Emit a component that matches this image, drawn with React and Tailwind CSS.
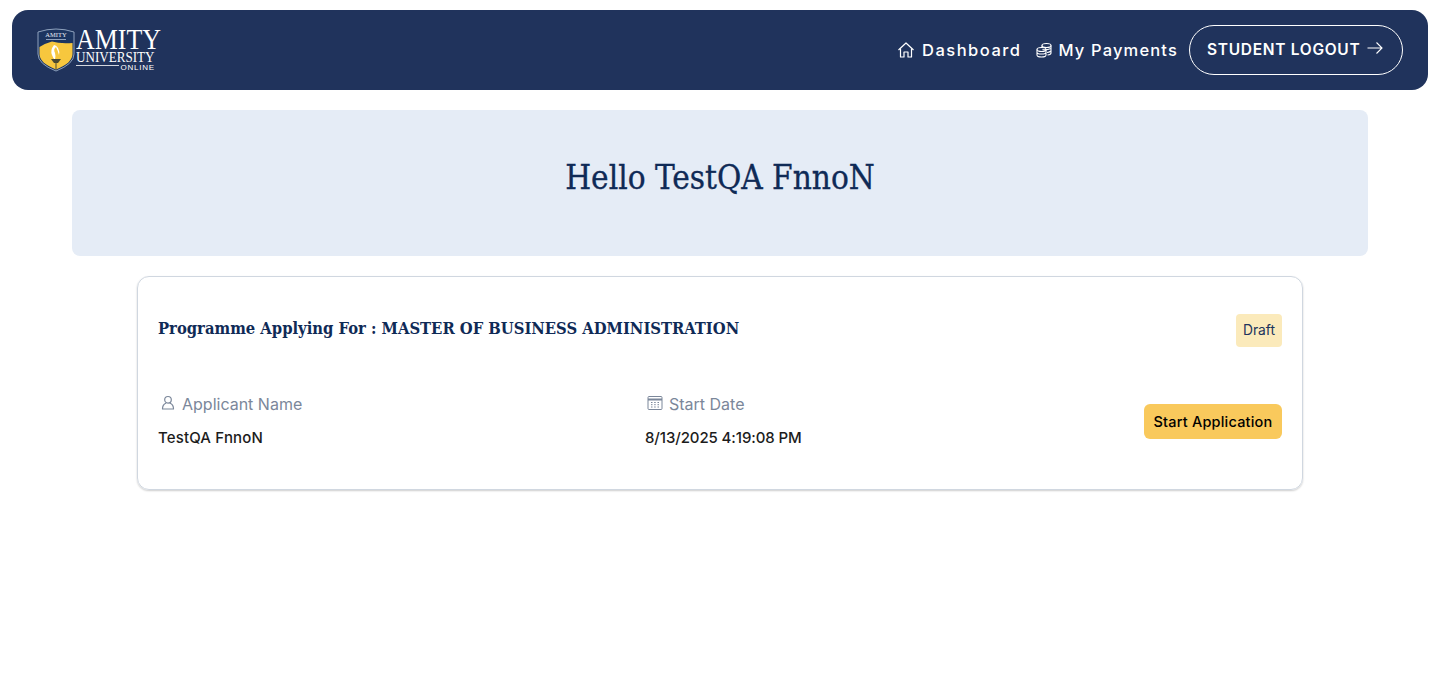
import React from "react";

const sans = "font-['Inter','Noto_Sans',sans-serif]";
const lib = "font-['Liberation_Serif',serif]";
const serif = "font-['DejaVu_Serif_Condensed','DejaVu_Serif',serif]";

function Logo() {
  return (
    <div className="flex items-center gap-[1px]">
      <svg width="38" height="44" viewBox="0 0 38 44" className="shrink-0">
        <path d="M1 4 Q10 1 19 1 Q28 1 37 4 V26 Q37 36 19 43 Q1 36 1 26 Z" fill="#1c3560" stroke="#8fa2bd" strokeWidth="1" />
        <path d="M2.5 19 Q9 15 15 13.5 Q23 16 35.5 15 V26 Q35.5 35 19 41.5 Q2.5 35 2.5 26 Z" fill="#f7c73e" />
        <text x="19" y="9" textAnchor="middle" fill="#e8edf5" fontSize="6.5" fontFamily="Liberation Serif">AMITY</text>
        <rect x="9" y="11" width="20" height="1" fill="#8fa2bd" />
        <path d="M17 17 Q13 22 15 27 Q16 30 18 32 Q19 28 18 25 Q16 21 19 19 Q21 23 22 27 Q23 24 21 20 Q19 17 17 17 Z" fill="#ffffff" />
        <path d="M14 31 L24 31 L21 35 L17 35 Z" fill="#4a4a32" />
        <path d="M19 35 V41" stroke="#4a4a32" strokeWidth="1" />
      </svg>
      <div className={`${lib} w-[85px] h-[46px] text-white whitespace-nowrap leading-none`}>
        <div className="text-[30px] leading-[24px] scale-x-[0.865] origin-left">AMITY</div>
        <div className="text-[15.5px] leading-[12px] scale-x-[0.845] origin-left">UNIVERSITY</div>
        <div className="flex items-center w-[79px] gap-[1px] mt-[1px]">
          <span className="flex-1 h-px bg-white/80 -mt-[6px]" />
          <span className="font-['Liberation_Sans',sans-serif] text-[8px] leading-[8px] tracking-[0.8px]">ONLINE</span>
        </div>
      </div>
    </div>
  );
}

function HomeIcon() {
  return (
    <svg width="18" height="18" viewBox="0 0 18 18" fill="none" stroke="white" strokeWidth="1.2" strokeLinejoin="round">
      <path d="M1.5 9 L9 2 L16.5 9" />
      <path d="M3.5 7.5 V16 H7 V11 H11 V16 H14.5 V7.5" />
    </svg>
  );
}

function CoinsIcon() {
  return (
    <svg width="16" height="16" viewBox="0 0 16 16" fill="none" stroke="white" strokeWidth="1.1">
      <ellipse cx="10.5" cy="3.5" rx="4.5" ry="2" />
      <path d="M6 3.5 V6 M15 3.5 V11 Q15 12.6 11.5 13 M6.5 7.5 Q10 8.5 15 6.5 M11 10.5 Q13 10.5 15 9" />
      <ellipse cx="5.5" cy="7.5" rx="4.5" ry="2" />
      <path d="M1 7.5 V13 Q1 15 5.5 15 Q10 15 10 13 V7.5 M1 10.2 Q1 12 5.5 12 Q10 12 10 10.2" />
    </svg>
  );
}

function UserIcon() {
  return (
    <svg width="16" height="16" viewBox="0 0 16 16" fill="none" stroke="#7b879a" strokeWidth="1.2" strokeLinecap="round" className="-mt-[2px]">
      <circle cx="8" cy="4.8" r="3.3" />
      <path d="M2.5 14 Q2.5 9.5 5.8 8.2 M13.5 14 Q13.5 9.5 10.2 8.2 M2.5 14 H13.5" />
    </svg>
  );
}

function CalendarIcon() {
  return (
    <svg width="16" height="16" viewBox="0 0 16 16" fill="none" stroke="#7b879a" strokeWidth="1" className="-mt-[3px]">
      <rect x="1" y="1.5" width="14" height="13" rx="1" />
      <path d="M1 4.5 H15" strokeWidth="2" />
      <path d="M4 7.5h1.5M7.2 7.5h1.5M10.5 7.5h1.5M4 9.7h1.5M7.2 9.7h1.5M10.5 9.7h1.5M4 12h1.5M7.2 12h1.5M10.5 12h1.5" />
    </svg>
  );
}

function ArrowIcon() {
  return (
    <svg width="16" height="14" viewBox="0 0 16 14" fill="none" stroke="white" strokeWidth="1.1" className="-mt-[4px]">
      <path d="M0.5 7 H15 M9.5 1.5 L15 7 L9.5 12.5" />
    </svg>
  );
}

export default function App() {
  return (
    <div className={`${sans} min-h-[681px] bg-white pt-[10px]`}>
      <header className="mx-3 h-20 rounded-2xl bg-[#20335c] flex items-center justify-between pl-[25px] pr-[25px]">
        <Logo />
        <nav className="flex items-center text-white">
          <a className="flex items-center gap-[7px] text-[16.5px] font-medium tracking-[1.5px] mr-[14px]">
            <HomeIcon />
            Dashboard
          </a>
          <a className="flex items-center gap-[7px] text-[16.5px] font-medium tracking-[1.15px] mr-[11px]">
            <CoinsIcon />
            My Payments
          </a>
          <button className="h-[50px] w-[214px] rounded-[25px] border border-white flex items-center pl-[17px] gap-[7px] text-[15.5px] font-semibold tracking-[0.7px]">
            STUDENT LOGOUT
            <ArrowIcon />
          </button>
        </nav>
      </header>

      <section className="mx-[72px] mt-5 h-[146px] rounded-lg bg-[#e5ecf6] flex items-center justify-center">
        <h1 className={`${serif} text-[33px] text-[#0f2a56] font-normal -mt-[11px] [-webkit-text-stroke:0.3px_#0f2a56]`}>Hello TestQA FnnoN</h1>
      </section>

      <section className="mx-[137px] mt-5 h-[214px] rounded-xl border border-[#d0d7e0] shadow-[0_1px_2px_rgba(0,0,0,0.2)] px-5 flex flex-col">
        <div className="flex items-center justify-between mt-[37px]">
          <h2 className={`${serif} text-[16.45px] font-bold text-[#0f2a56] -mt-[2px]`}>
            Programme Applying For : MASTER OF BUSINESS ADMINISTRATION
          </h2>
          <span className="h-[33px] w-[46px] rounded bg-[#fbeabb] text-[#20335c] text-[13.8px] flex items-center justify-center">
            Draft
          </span>
        </div>
        <div className="flex items-center justify-between mt-[45px]">
          <div className="w-[487px]">
            <div className="flex items-center gap-[6px] text-[16px] text-[#7b879a] pl-[2px]">
              <UserIcon />
              Applicant Name
            </div>
            <div className="mt-[11px] text-[15px] tracking-[0.15px] font-medium text-[#1c1c1c]">TestQA FnnoN</div>
          </div>
          <div className="flex-1">
            <div className="flex items-center gap-[6px] text-[16px] text-[#7b879a] pl-[2px]">
              <CalendarIcon />
              Start Date
            </div>
            <div className="mt-[11px] text-[15px] tracking-[-0.1px] font-medium text-[#1c1c1c]">8/13/2025 4:19:08 PM</div>
          </div>
          <button className="h-[35px] w-[138px] rounded-md bg-[#f9c95c] text-[14.5px] tracking-[0.2px] font-medium text-black mt-[2px]">
            Start Application
          </button>
        </div>
      </section>
    </div>
  );
}
